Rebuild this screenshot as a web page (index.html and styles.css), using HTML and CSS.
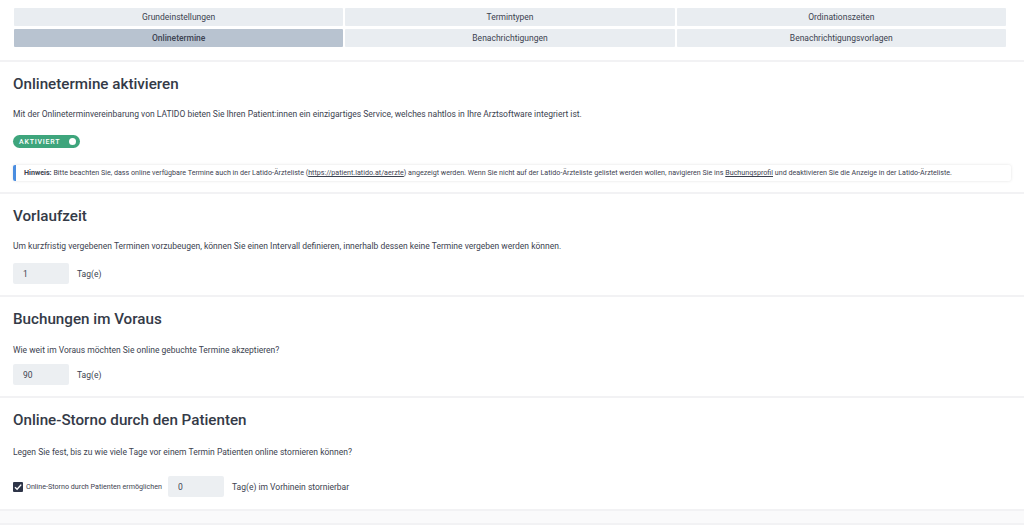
FILE: index.html
```html
<!DOCTYPE html>
<html lang="de">
<head>
    <meta charset="UTF-8">
    <meta name="viewport" content="width=device-width, initial-scale=1.0">
    <title>Onlinetermine</title>
    <link rel="stylesheet" href="styles.css">
</head>
<body>
    <nav class="tabs">
        <a class="tab">Grundeinstellungen</a>
        <a class="tab">Termintypen</a>
        <a class="tab">Ordinationszeiten</a>
        <a class="tab active">Onlinetermine</a>
        <a class="tab">Benachrichtigungen</a>
        <a class="tab">Benachrichtigungsvorlagen</a>
    </nav>

    <section class="card first">
        <h2>Onlinetermine aktivieren</h2>
        <p class="desc">Mit der Onlineterminvereinbarung von LATIDO bieten Sie Ihren Patient:innen ein einzigartiges Service, welches nahtlos in Ihre Arztsoftware integriert ist.</p>
        <div class="toggle">
            <span>AKTIVIERT</span>
            <span class="knob"></span>
        </div>
        <div class="notice">
            <b>Hinweis:</b> Bitte beachten Sie, dass online verfügbare Termine auch in der Latido-Ärzteliste (<a href="#">https://patient.latido.at/aerzte</a>) angezeigt werden. Wenn Sie nicht auf der Latido-Ärzteliste gelistet werden wollen, navigieren Sie ins <a href="#">Buchungsprofil</a> und deaktivieren Sie die Anzeige in der Latido-Ärzteliste.
        </div>
    </section>

    <section class="card">
        <h2>Vorlaufzeit</h2>
        <p class="desc">Um kurzfristig vergebenen Terminen vorzubeugen, können Sie einen Intervall definieren, innerhalb dessen keine Termine vergeben werden können.</p>
        <div class="field">
            <input type="text" value="1">
            <span>Tag(e)</span>
        </div>
    </section>

    <section class="card">
        <h2>Buchungen im Voraus</h2>
        <p class="desc tight">Wie weit im Voraus möchten Sie online gebuchte Termine akzeptieren?</p>
        <div class="field">
            <input type="text" value="90">
            <span>Tag(e)</span>
        </div>
    </section>

    <section class="card last">
        <h2>Online-Storno durch den Patienten</h2>
        <p class="desc loose">Legen Sie fest, bis zu wie viele Tage vor einem Termin Patienten online stornieren können?</p>
        <div class="field">
            <label class="check">
                <span class="box">
                    <svg viewBox="0 0 10 10" width="10" height="10"><path d="M2 5.2 L4.1 7.3 L8.2 2.6" fill="none" stroke="#fff" stroke-width="1.4"/></svg>
                </span>
                Online-Storno durch Patienten ermöglichen
            </label>
            <input type="text" value="0">
            <span>Tag(e) im Vorhinein stornierbar</span>
        </div>
    </section>

    <div class="rest"></div>
</body>
</html>
```

FILE: styles.css
```css
body {
    margin: 0;
    font-family: Roboto, "Liberation Sans", sans-serif;
    background-color: #f2f2f4;
    color: #3c4250;
}

.tabs {
    background: #ffffff;
    display: grid;
    grid-template-columns: 1fr 1fr 1fr;
    gap: 3px 2px;
    padding: 8px 18px 13px 14px;
}

.tab {
    background-color: #e9edf1;
    height: 18px;
    line-height: 18px;
    text-align: center;
    font-size: 8.5px;
    color: #3c4250;
    border-radius: 1px;
}

.tab.active {
    background-color: #b8c3d0;
    font-weight: 500;
}

.card {
    background: #ffffff;
    margin-top: 2px;
    padding: 11px 13px 11px 13px;
}

.card.last {
    padding-bottom: 12px;
}

h2 {
    margin: 0 0 12px 0;
    font-size: 15.2px;
    font-weight: 500;
    line-height: 22px;
    color: #343a47;
}

.desc {
    margin: 0 0 10px 0;
    font-size: 8.5px;
    line-height: 14px;
    color: #3c4250;
}

.desc.tight {
    margin-top: 13px;
    margin-bottom: 7px;
}

.desc.loose {
    margin-top: 14px;
    margin-bottom: 17px;
}

.card.first .desc {
    margin-bottom: 14px;
}

.toggle {
    width: 67px;
    height: 13px;
    border-radius: 7px;
    background-color: #3ea57c;
    display: flex;
    align-items: center;
    justify-content: space-between;
    padding: 0 4px 0 6px;
    box-sizing: border-box;
    color: #ffffff;
    font-size: 7px;
    font-weight: 500;
    letter-spacing: 0.8px;
}

.knob {
    width: 7px;
    height: 7px;
    border-radius: 50%;
    background: #ffffff;
}

.notice {
    margin-top: 17px;
    border-left: 3px solid #4a8de0;
    border-radius: 2px;
    box-shadow: 0 0 3px rgba(0, 0, 0, 0.12);
    padding: 0 8px;
    height: 16px;
    line-height: 16px;
    font-size: 7.15px;
    color: #3c4250;
    white-space: nowrap;
    overflow: hidden;
}

.notice b {
    font-weight: 700;
}

.notice a {
    color: #3c4250;
    text-decoration: underline;
}

.field {
    display: flex;
    align-items: center;
    gap: 8px;
    font-size: 8.5px;
}

.field input {
    width: 56px;
    height: 21px;
    box-sizing: border-box;
    border: none;
    border-radius: 2px;
    background-color: #eceff2;
    padding: 0 10px;
    font-family: inherit;
    font-size: 8.5px;
    color: #3c4250;
}

.check {
    display: flex;
    align-items: center;
    gap: 3px;
    font-size: 7.15px;
    margin-right: -2px;
}

.box {
    width: 10px;
    height: 10px;
    background-color: #2e3548;
    border-radius: 1px;
    display: flex;
}

.rest {
    height: 12px;
    margin-top: 2px;
    background: #fafafb;
}
```
